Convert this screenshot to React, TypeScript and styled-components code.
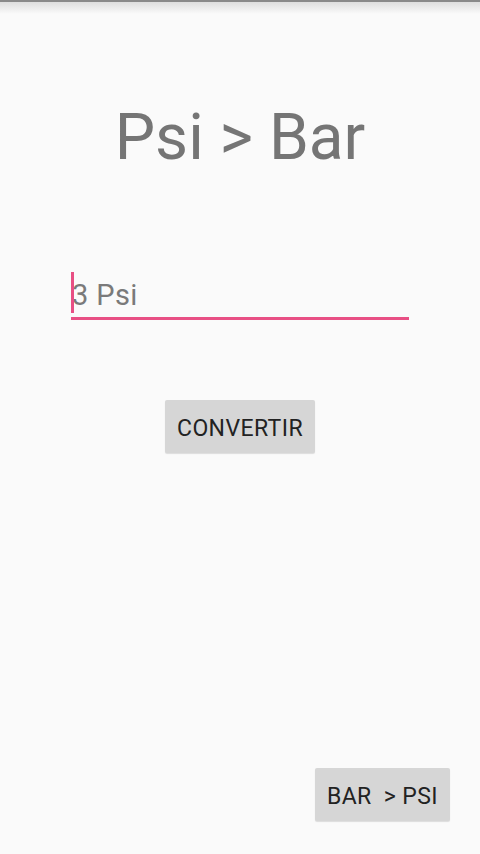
import styled, { createGlobalStyle } from "styled-components";

const GlobalStyle = createGlobalStyle`
  html, body {
    margin: 0;
    padding: 0;
    background: #fafafa;
  }
  * {
    box-sizing: border-box;
  }
`;

const App = () => {
  return (
    <>
      <GlobalStyle />
      <Screen>
        <TopShadow />
        <Title>Psi &gt; Bar</Title>
        <InputRow>
          <Field>
            <Caret />
            <Value>3 Psi</Value>
          </Field>
        </InputRow>
        <Center>
          <FlatButton>CONVERTIR</FlatButton>
        </Center>
        <Footer>
          <FlatButton>BAR &nbsp;&gt; PSI</FlatButton>
        </Footer>
      </Screen>
    </>
  );
};

const Screen = styled.div`
  width: 480px;
  height: 854px;
  display: flex;
  flex-direction: column;
  background: #fafafa;
  font-family: Roboto, "Noto Sans", sans-serif;
`;

const TopShadow = styled.div`
  height: 14px;
  border-top: 2px solid #8a8a8a;
  background: linear-gradient(#dedede, #fafafa);
`;

const Title = styled.h1`
  margin: 88px 0 0;
  text-align: center;
  font-weight: 400;
  font-size: 64px;
  line-height: 72px;
  color: #757575;
`;

const InputRow = styled.div`
  display: flex;
  justify-content: center;
  margin-top: 98px;
`;

const Field = styled.div`
  position: relative;
  width: 338px;
  height: 48px;
  display: flex;
  align-items: center;
  border-bottom: 3px solid #e84f84;
`;

const Caret = styled.span`
  position: absolute;
  left: 0;
  top: 0;
  width: 3px;
  height: 41px;
  background: #e84f84;
`;

const Value = styled.span`
  margin-left: 1px;
  font-size: 29px;
  letter-spacing: 0.4px;
  color: #7a7a7a;
`;

const Center = styled.div`
  display: flex;
  justify-content: center;
  margin-top: 80px;
`;

const FlatButton = styled.button`
  height: 53px;
  padding: 3px 12px 0;
  border: none;
  border-radius: 2px;
  background: #d6d6d6;
  box-shadow: 0 1px 1px rgba(0, 0, 0, 0.12);
  font-family: Roboto, "Noto Sans", sans-serif;
  font-size: 23px;
  letter-spacing: 0.4px;
  color: #222222;
  white-space: nowrap;
`;

const Footer = styled.div`
  margin-top: auto;
  display: flex;
  justify-content: flex-end;
  padding: 0 30px 33px 0;
`;

export default App;
